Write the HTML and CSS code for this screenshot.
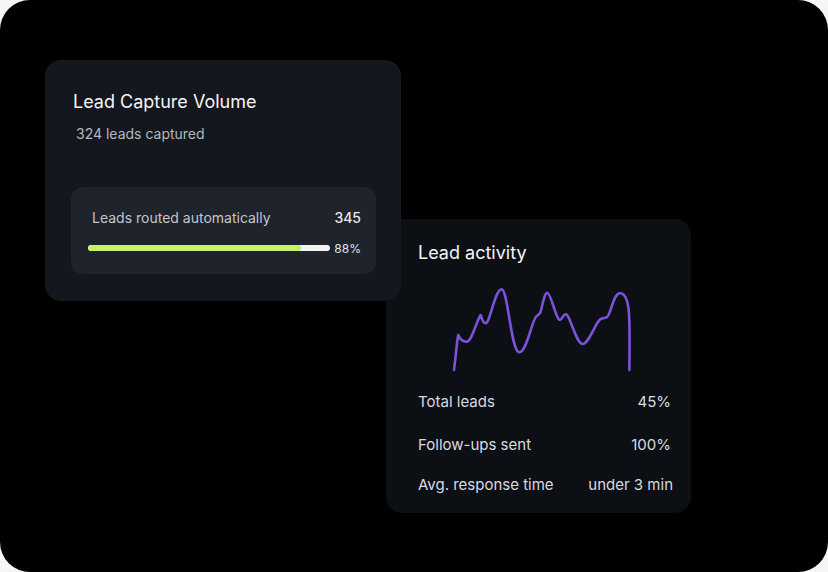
FILE: index.html
```html
<!DOCTYPE html>
<html lang="en">
<head>
    <meta charset="UTF-8">
    <meta name="viewport" content="width=device-width, initial-scale=1.0">
    <title>Lead overview</title>
    <link rel="stylesheet" href="styles.css">
</head>
<body>
    <div class="stage">
        <div class="card capture">
            <div class="card-title">Lead Capture Volume</div>
            <div class="card-sub">324 leads captured</div>
            <div class="routed">
                <div class="routed-head">
                    <span class="routed-label">Leads routed automatically</span>
                    <span class="routed-count">345</span>
                </div>
                <div class="routed-bar">
                    <div class="track"><div class="fill" style="width: 88%"></div></div>
                    <span class="pct">88%</span>
                </div>
            </div>
        </div>

        <div class="card activity">
            <div class="card-title">Lead activity</div>
            <svg class="chart" width="184" height="90" viewBox="0 0 184 90">
                <path d="M4 86 C6 70 7 56 8.3 51 C10 55 13 58 16.7 57.7 C22 57 26 38 30.7 31 C32 35 33 39.3 35.7 39.3 C40 39 45 5 51.7 5.3 C58 6 61 68 69.3 68.3 C77 68 82 35 86.7 32 C88 31 89 30 90 29.3 C92 25 94 8.7 97.3 8.7 C101 9 106 36 110 36 C112 36 113 30.3 115.7 30.3 C120 30 126 60 132.7 60 C139 60 146 37 150.7 35 C153 34 155 34 156.7 33.3 C161 31 163 9.3 170 9.3 C175 9.3 178 15 179 30 C180 50 179.5 75 179.3 86"
                      fill="none" stroke="#7c52dc" stroke-width="2.6" stroke-linecap="round" stroke-linejoin="round"/>
            </svg>
            <div class="stats">
                <div class="stat"><span>Total leads</span><span>45%</span></div>
                <div class="stat"><span>Follow-ups sent</span><span>100%</span></div>
                <div class="stat"><span>Avg. response time</span><span class="wide">under 3 min</span></div>
            </div>
        </div>
    </div>
</body>
</html>
```

FILE: styles.css
```css
* {
    box-sizing: border-box;
}

body {
    margin: 0;
    background: #f6f6f6;
    font-family: Inter, "Noto Sans", Arial, sans-serif;
    color: #f2f3f5;
}

.stage {
    width: 828px;
    height: 572px;
    background: #000;
    border-radius: 30px;
    display: flex;
    align-items: flex-start;
    overflow: hidden;
}

.card {
    border-radius: 16px;
}

.card-title {
    font-size: 18px;
    line-height: 22px;
    color: #f4f5f7;
}

/* left card sits on top of the activity card */
.capture {
    position: relative;
    z-index: 1;
    width: 356px;
    height: 241px;
    margin: 60px 0 0 45px;
    padding: 31px 25px 0 26px;
    background: #14171d;
}

.capture .card-title {
    padding-left: 2px;
}

.card-sub {
    margin-top: 11px;
    padding-left: 5px;
    font-size: 14px;
    line-height: 20px;
    color: #b3b7be;
}

.routed {
    margin-top: 43px;
    height: 87px;
    padding: 21px 15px 0 17px;
    background: #1f232b;
    border-radius: 12px;
}

.routed-head {
    display: flex;
    justify-content: space-between;
    font-size: 14px;
    line-height: 20px;
}

.routed-label {
    padding-left: 4px;
    color: #c3c6cc;
}

.routed-count {
    font-weight: 500;
    color: #e7e8eb;
}

.routed-bar {
    display: flex;
    align-items: center;
    gap: 4px;
    margin-top: 12px;
    height: 16px;
}

.track {
    width: 243px;
    height: 6px;
    border-radius: 3px;
    background: #f3f3f3;
    overflow: hidden;
}

.fill {
    height: 100%;
    background: #c4f36a;
    border-radius: 3px;
}

.pct {
    font-size: 12px;
    color: #e4e5e8;
}

.activity {
    width: 305px;
    height: 294px;
    margin: 219px 0 0 -15px;
    padding: 23px 18px 0 32px;
    background: #0c0f14;
}

.chart {
    display: block;
    margin: 20px 0 0 32px;
}

.stats {
    margin-top: 18px;
    font-size: 15px;
    line-height: 20px;
    color: #d9dbe0;
}

.stat {
    display: flex;
    justify-content: space-between;
    padding-right: 2px;
}

.stat + .stat {
    margin-top: 23px;
}

.stat:last-child {
    margin-top: 20px;
    padding-right: 0;
}
```
